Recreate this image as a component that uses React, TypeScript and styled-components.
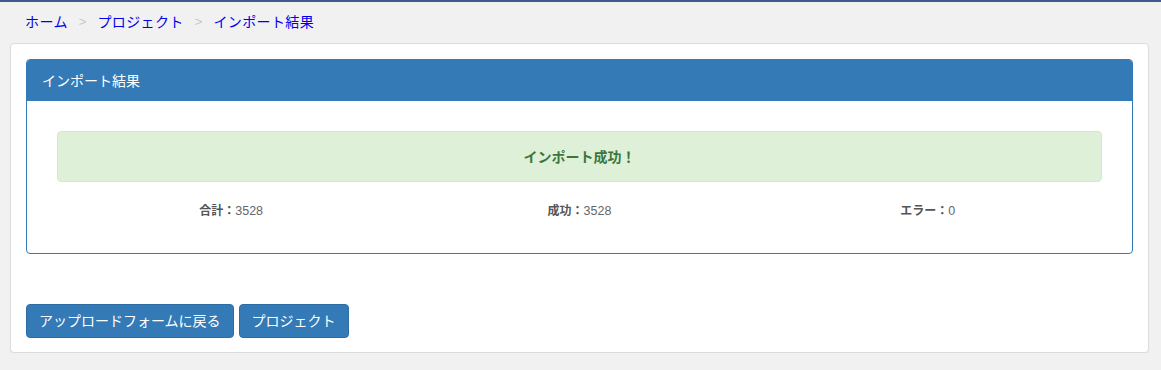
import React from "react";
import styled, { createGlobalStyle } from "styled-components";

const Global = createGlobalStyle`
  html, body { margin: 0; padding: 0; background: #f1f1f1; }
  body {
    font-family: "Liberation Sans", "Noto Sans CJK JP", sans-serif;
    font-size: 14px;
    line-height: 20px;
    color: #333;
  }
  * { box-sizing: border-box; }
`;

const TopBar = styled.div`
  height: 2px;
  background: #3b5b8c;
`;

const Breadcrumb = styled.nav`
  display: flex;
  align-items: center;
  height: 41px;
  padding: 0 0 2px 25px;
`;

const Crumb = styled.a`
  color: #0000ee;
  text-decoration: none;
  font-size: 14px;
  letter-spacing: 0.4px;
`;

const Sep = styled.span`
  color: #c8c8c8;
  padding: 0 11px 0 11px;
  font-size: 13px;
`;

const Card = styled.div`
  margin: 0 12px 0 10px;
  background: #fff;
  border: 1px solid #dcdcdc;
  border-radius: 4px;
  box-shadow: 0 1px 1px rgba(0, 0, 0, 0.06);
  padding: 15px 15px 14px;
`;

const Panel = styled.div`
  border: 1px solid #337ab7;
  border-radius: 4px;
  overflow: hidden;
`;

const PanelHeading = styled.div`
  background: #337ab7;
  color: #fff;
  padding: 11px 15px 10px;
  height: 41px;
  font-size: 14px;
`;

const PanelBody = styled.div`
  padding: 30px 30px 33px;
`;

const Alert = styled.div`
  background: #dff0d8;
  border: 1px solid #d6e9c6;
  border-radius: 4px;
  color: #3c763d;
  font-weight: bold;
  text-align: center;
  padding: 15px;
  height: 51px;
`;

const Stats = styled.div`
  display: grid;
  grid-template-columns: repeat(3, 1fr);
  margin-top: 20px;
  line-height: 18px;
`;

const Stat = styled.div`
  text-align: center;
  font-size: 12px;
  color: #666;
`;

const Value = styled.span`
  font-size: 12.5px;
`;

const Label = styled.b`
  color: #555;
`;

const Actions = styled.div`
  display: flex;
  gap: 5px;
  margin-top: 50px;
`;

const Button = styled.button`
  font-family: inherit;
  font-size: 14px;
  line-height: 20px;
  color: #fff;
  background: #337ab7;
  border: 1px solid #2e6da4;
  border-radius: 4px;
  padding: 6px 12px;
  height: 34px;
  cursor: pointer;
`;

export default function App() {
  return (
    <>
      <Global />
      <TopBar />
      <Breadcrumb>
        <Crumb href="#">ホーム</Crumb>
        <Sep>&gt;</Sep>
        <Crumb href="#">プロジェクト</Crumb>
        <Sep>&gt;</Sep>
        <Crumb href="#">インポート結果</Crumb>
      </Breadcrumb>
      <Card>
        <Panel>
          <PanelHeading>インポート結果</PanelHeading>
          <PanelBody>
            <Alert>インポート成功！</Alert>
            <Stats>
              <Stat>
                <Label>合計：</Label>
                <Value>3528</Value>
              </Stat>
              <Stat>
                <Label>成功：</Label>
                <Value>3528</Value>
              </Stat>
              <Stat>
                <Label>エラー：</Label>
                <Value>0</Value>
              </Stat>
            </Stats>
          </PanelBody>
        </Panel>
        <Actions>
          <Button>アップロードフォームに戻る</Button>
          <Button>プロジェクト</Button>
        </Actions>
      </Card>
    </>
  );
}
